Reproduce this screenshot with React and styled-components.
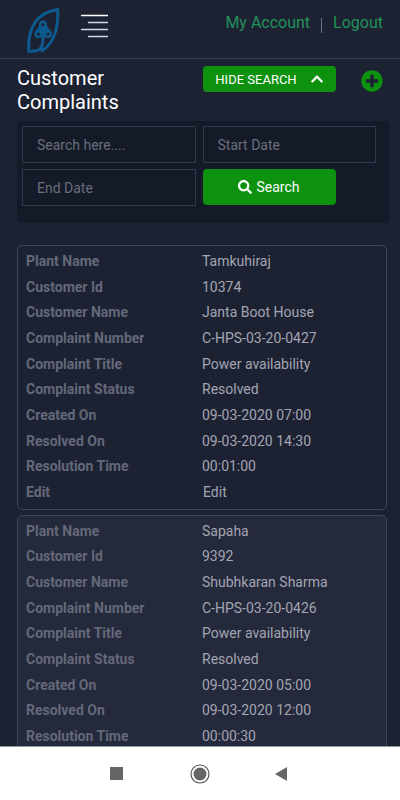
import React from 'react';
import styled, { createGlobalStyle } from 'styled-components';
import { FaSearch, FaChevronUp, FaPlusCircle } from 'react-icons/fa';

const GlobalStyle = createGlobalStyle`
  *, *::before, *::after { box-sizing: border-box; }
  body { margin: 0; background: #1d2233; }
  body, button, input { font-family: Roboto, "Liberation Sans", sans-serif; }
`;

const Screen = styled.div`
  display: flex;
  flex-direction: column;
  height: 100vh;
  background: #1d2233;
  color: #a3a5b2;
`;

const Header = styled.header`
  display: flex;
  align-items: flex-start;
  flex: none;
  padding: 8px 17px 4px 26px;
  border-bottom: 1px solid #363b4e;
`;

const LogoLink = styled.a`
  display: block;
  height: 46px;
`;

const MenuButton = styled.button`
  display: block;
  margin: 6px 0 0 20px;
  padding: 0;
  border: 0;
  background: none;
  cursor: pointer;
  svg { display: block; }
`;

const AccountNav = styled.nav`
  display: flex;
  align-items: center;
  gap: 11px;
  margin: 4px 0 0 auto;
`;

const AccountLink = styled.a`
  color: #22925a;
  font-size: 16px;
  line-height: 20px;
  text-decoration: none;
`;

const Divider = styled.span`
  width: 1px;
  height: 15px;
  margin-top: 6px;
  background: #6d7283;
`;

const Content = styled.main`
  flex: 1;
  min-height: 0;
  padding: 7px 11px 0 17px;
  overflow-y: auto;
  scrollbar-width: none;
`;

const TitleBar = styled.div`
  display: grid;
  grid-template-columns: 1fr 1fr;
  align-items: start;
`;

const Title = styled.h1`
  margin: 0;
  padding-right: 50px;
  color: #fff;
  font-size: 20px;
  font-weight: 400;
  line-height: 24px;
`;

const TitleActions = styled.div`
  display: flex;
  justify-content: space-between;
  padding-right: 6px;
`;

const GreenButton = styled.button`
  display: flex;
  align-items: center;
  justify-content: center;
  gap: ${({ $gap }) => $gap}px;
  width: 133px;
  height: ${({ $height }) => $height}px;
  padding: 0;
  border: 0;
  border-radius: 4px;
  background: #0d910e;
  color: #fff;
  font-size: ${({ $size }) => $size}px;
  cursor: pointer;
`;

const AddButton = styled.button`
  display: block;
  margin-top: 3px;
  padding: 0;
  border: 0;
  background: none;
  color: #0d910e;
  cursor: pointer;
  svg { display: block; }
`;

const SearchPanel = styled.form`
  display: grid;
  grid-template-columns: 1fr 1fr;
  gap: 6px 7px;
  margin: 7px 0 22px;
  padding: 5px 13px 17px 5px;
  border-radius: 4px;
  background: #151a29;
`;

const Field = styled.input`
  width: 100%;
  min-width: 0;
  height: 37px;
  padding: 0 14px;
  border: 1px solid #323749;
  border-radius: 0;
  outline: 0;
  background: transparent;
  color: #a3a5b2;
  font-size: 14px;
  &::placeholder { color: #6b6e7c; opacity: 1; }
`;

const Card = styled.section`
  margin: 0 2px 5px 0;
  padding: 2px 0 4px;
  border: 1px solid #3d475a;
  border-radius: 5px;
  background: ${({ $shaded }) => ($shaded ? '#24293b' : '#1d2233')};
`;

const Details = styled.table`
  width: 100%;
  height: ${({ $editable }) => ($editable ? 257 : 231)}px;
  table-layout: fixed;
  border-collapse: collapse;
  font-size: 14px;
  line-height: 20px;
`;

const Label = styled.th`
  width: 50%;
  padding: 0 0 0 8px;
  color: #646879;
  font-weight: 700;
  text-align: left;
`;

const Value = styled.td`
  padding: 0;
`;

const EditLink = styled.a`
  padding-left: 1px;
  color: inherit;
  text-decoration: none;
`;

const SystemBar = styled.nav`
  display: flex;
  align-items: center;
  justify-content: space-between;
  flex: none;
  height: 54px;
  padding: 0 27%;
  border-top: 1px solid #9497a2;
  background: #fff;
`;

const SystemButton = styled.button`
  display: block;
  padding: 0;
  border: 0;
  background: none;
  svg { display: block; }
`;

const complaints = [
  {
    editable: true,
    fields: {
      'Plant Name': 'Tamkuhiraj',
      'Customer Id': '10374',
      'Customer Name': 'Janta Boot House',
      'Complaint Number': 'C-HPS-03-20-0427',
      'Complaint Title': 'Power availability',
      'Complaint Status': 'Resolved',
      'Created On': '09-03-2020 07:00',
      'Resolved On': '09-03-2020 14:30',
      'Resolution Time': '00:01:00',
    },
  },
  {
    editable: false,
    fields: {
      'Plant Name': 'Sapaha',
      'Customer Id': '9392',
      'Customer Name': 'Shubhkaran Sharma',
      'Complaint Number': 'C-HPS-03-20-0426',
      'Complaint Title': 'Power availability',
      'Complaint Status': 'Resolved',
      'Created On': '09-03-2020 05:00',
      'Resolved On': '09-03-2020 12:00',
      'Resolution Time': '00:00:30',
    },
  },
];

function Logo() {
  return (
    <svg width="34" height="46" viewBox="0 0 34 46" fill="none" aria-hidden="true">
      <path
        d="M17 27V32C17 38 14 43 9 43L2.800 43.500C2 31 4 22 9 14.500C14 7 22 3 31.500 1.500C32.500 14 30 26 25 34C22 38.500 19 41 15 43.500"
        stroke="#0d5a8e"
        strokeWidth="3"
      />
      <g fill="#0d5a8e">
        <path d="M15 15h4l6 9-1 6H10l-1-6z" />
        <circle cx="17" cy="16.500" r="4" />
        <circle cx="12.500" cy="26" r="4" />
        <circle cx="22" cy="26" r="4" />
      </g>
      <g fill="#1d2233">
        <circle cx="17" cy="16.500" r="1.600" />
        <circle cx="12.500" cy="26" r="1.600" />
        <circle cx="22" cy="26" r="1.600" />
        <path d="M14.300 31l1-3v3zM19.700 31l-1-3v3z" />
      </g>
    </svg>
  );
}

function MenuIcon() {
  return (
    <svg width="28" height="25" viewBox="0 0 28 25" strokeWidth="1.300" strokeLinecap="round" aria-hidden="true">
      <path d="M1.500 1.500h26" stroke="#fff" />
      <path d="M8.500 8.500h19M1.500 15.500h26M8.500 22.500h19" stroke="#d5d9ea" />
    </svg>
  );
}

function ComplaintCard({ complaint, shaded }) {
  return (
    <Card $shaded={shaded}>
      <Details $editable={complaint.editable}>
        <tbody>
          {Object.entries(complaint.fields).map(([label, value]) => (
            <tr key={label}>
              <Label scope="row">{label}</Label>
              <Value>{value}</Value>
            </tr>
          ))}
          {complaint.editable && (
            <tr>
              <Label scope="row">Edit</Label>
              <Value><EditLink href="#edit">Edit</EditLink></Value>
            </tr>
          )}
        </tbody>
      </Details>
    </Card>
  );
}

export default function App() {
  return (
    <Screen>
      <GlobalStyle />
      <Header>
        <LogoLink href="#home" aria-label="Home"><Logo /></LogoLink>
        <MenuButton type="button" aria-label="Menu"><MenuIcon /></MenuButton>
        <AccountNav>
          <AccountLink href="#account">My Account</AccountLink>
          <Divider />
          <AccountLink href="#logout">Logout</AccountLink>
        </AccountNav>
      </Header>
      <Content>
        <TitleBar>
          <Title>Customer Complaints</Title>
          <TitleActions>
            <GreenButton type="button" $height={26} $gap={13} $size={13}>
              HIDE SEARCH <FaChevronUp size={14} />
            </GreenButton>
            <AddButton type="button" aria-label="Add complaint"><FaPlusCircle size={22} /></AddButton>
          </TitleActions>
        </TitleBar>
        <SearchPanel onSubmit={(event) => event.preventDefault()}>
          <Field type="text" placeholder="Search here...." aria-label="Search" />
          <Field type="text" placeholder="Start Date" aria-label="Start date" />
          <Field type="text" placeholder="End Date" aria-label="End date" />
          <GreenButton type="submit" $height={36} $gap={4} $size={14}>
            <FaSearch size={14} /> Search
          </GreenButton>
        </SearchPanel>
        {complaints.map((complaint, index) => (
          <ComplaintCard
            key={complaint.fields['Complaint Number']}
            complaint={complaint}
            shaded={index % 2 === 1}
          />
        ))}
      </Content>
      <SystemBar aria-label="System navigation">
        <SystemButton type="button" aria-label="Recent apps">
          <svg width="18" height="14" viewBox="0 0 18 14"><path d="M2 0h13v13H2z" fill="#666" /></svg>
        </SystemButton>
        <SystemButton type="button" aria-label="Home screen">
          <svg width="20" height="20" viewBox="0 0 20 20">
            <circle cx="10" cy="10" r="9" fill="none" stroke="#555" strokeWidth="1.200" />
            <circle cx="10" cy="10" r="6.500" fill="#666" />
          </svg>
        </SystemButton>
        <SystemButton type="button" aria-label="Back">
          <svg width="18" height="16" viewBox="0 0 18 16"><path d="M1 8l12-7v14z" fill="#666" /></svg>
        </SystemButton>
      </SystemBar>
    </Screen>
  );
}
